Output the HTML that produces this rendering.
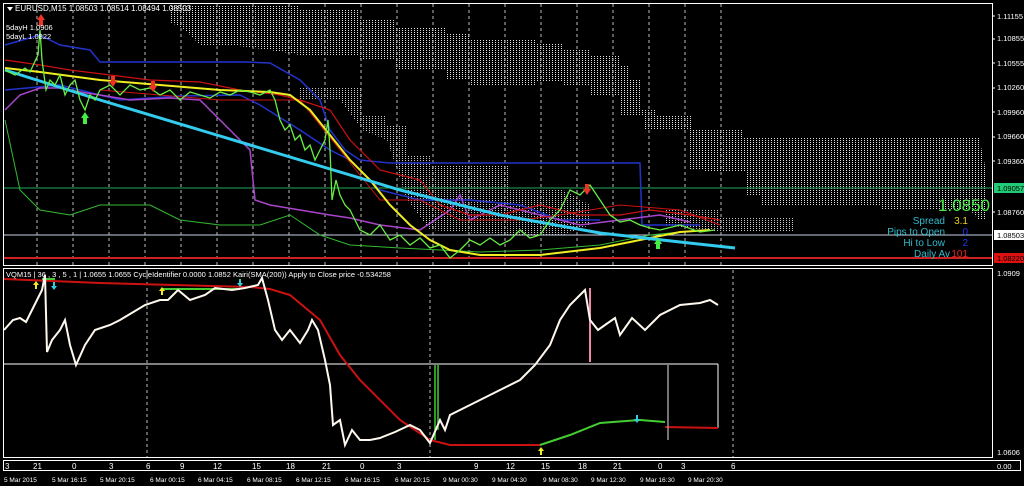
<!DOCTYPE html>
<html><head><meta charset="utf-8"><style>
html,body{margin:0;padding:0;background:#000;width:1024px;height:486px;overflow:hidden}
svg{display:block}
text{font-family:"Liberation Sans",sans-serif}
</style></head><body>
<svg width="1024" height="486" viewBox="0 0 1024 486" xmlns="http://www.w3.org/2000/svg">
<defs>
<pattern id="dots" width="3" height="2" patternUnits="userSpaceOnUse"><rect x="0" y="0" width="1" height="1" fill="#e0e0e0"/></pattern>
</defs>
<rect width="1024" height="486" fill="#000"/>
<!-- upper cloud band -->
<path d="M170,5 L300,5 L300,10 L360,10 L360,20 L396,20 L396,27 L447,27 L447,33 L470,33 L470,40 L537,40 L537,43 L563,43 L563,50 L590,50 L590,55 L621,55 L621,65 L630,65 L630,80 L641,80 L641,110 L657,110 L657,115 L693,115 L693,130 L742,130 L742,137 L979,137 L985,165 L985,220 L979,220 L970,210 L880,210 L880,205 L760,205 L760,195 L746,195 L746,172 L704,172 L704,170 L688,170 L688,130 L644,130 L644,115 L621,115 L621,95 L590,95 L590,85 L563,85 L563,82 L537,82 L537,85 L470,85 L470,80 L447,80 L447,70 L396,70 L396,60 L360,60 L360,55 L300,55 L270,50 L230,45 L200,45 L185,30 L170,22 Z" fill="url(#dots)"/>
<!-- lower cloud pieces -->
<path d="M300,88 L362,88 L362,115 L387,115 L387,125 L407,125 L407,155 L430,155 L430,165 L508,165 L508,190 L563,190 L590,205 L590,225 L563,235 L508,235 L430,230 L407,200 L387,140 L362,130 L340,100 L300,100 Z" fill="url(#dots)" opacity="0.9"/>
<path d="M666,210 L720,210 L720,218 L795,218 L795,232 L720,232 L666,225 Z" fill="url(#dots)" opacity="0.9"/>
<!-- vertical dashed grid -->
<g stroke="#bbb" stroke-width="1" stroke-dasharray="3,3">
<path d="M37,4V265M73,4V265M109,4V265M145,4V265M181,4V265M217,4V265M253,4V265M289,4V265M325,4V265M361,4V265M397,4V265M433,4V265M469,4V265M505,4V265M541,4V265M577,4V265M613,4V265M649,4V265M685,4V265M721,4V265"/>
<path d="M147,270V457M430,270V457M733,270V457"/>
</g>
<!-- horizontal lines -->
<line x1="3" y1="188" x2="992" y2="188" stroke="#22aa55"/>
<line x1="3" y1="235" x2="992" y2="235" stroke="#c8d0e0"/>
<line x1="3" y1="258" x2="992" y2="258" stroke="#cc2222" stroke-width="2"/>
<!-- indicator lines main -->
<polyline fill="none" stroke="#2233cc" stroke-width="1.5" points="5,45 40,35 60,45 90,50 100,62 150,62 245,62 270,63 300,80 320,100 330,130 345,150 360,160 390,163 640,163 642,225 700,225"/>
<polyline fill="none" stroke="#2233cc" stroke-width="1.5" points="5,90 60,85 120,100 150,98 180,96 240,95 260,105 300,130 330,150 350,160 380,190 420,200 470,200 520,205 560,220 600,220"/>
<polyline fill="none" stroke="#aa44cc" stroke-width="1.5" points="5,110 20,95 40,88 60,88 80,92 100,95 130,100 170,98 200,100 230,130 250,150 255,200 270,205 300,210 330,215 350,218 380,225 420,230 450,210 460,195 470,220 480,215 500,205 540,215 580,225 620,220 660,215 690,222"/>
<polyline fill="none" stroke="#cc1111" stroke-width="1.2" points="5,60 40,65 70,70 110,75 150,80 200,82 240,90 280,95 300,100 330,110 350,140 360,150 380,170 400,175 420,180 440,205 470,215 500,215 540,205 580,215 620,215 650,210 690,215 720,220"/>
<polyline fill="none" stroke="#cc1111" stroke-width="1" points="100,90 160,95 220,100 300,100 340,150 380,200 420,200 460,220 520,220 560,215 620,205 680,210 720,225"/>
<polyline fill="none" stroke="#33bb33" stroke-width="1" points="5,120 20,190 40,210 70,215 100,205 150,205 180,220 220,225 260,225 290,215 320,235 350,245 400,248 440,250 480,252 540,250 600,245 650,235 700,230"/>
<polyline fill="none" stroke="#eeee22" stroke-width="2" points="5,68 40,72 100,80 160,85 220,90 270,92 290,95 310,110 330,135 350,160 370,180 390,205 410,225 430,240 450,250 480,255 540,255 600,248 640,240 680,232 710,230"/>
<polyline fill="none" stroke="#33ccee" stroke-width="3" points="5,70 100,100 200,130 300,160 400,190 500,215 600,233 680,242 735,248"/>
<!-- price -->
<polyline fill="none" stroke="#66ee44" stroke-width="1.3" points="5,70 15,75 25,68 30,72 38,55 40,30 42,60 46,90 50,80 55,85 60,75 65,95 70,85 75,80 80,100 85,110 90,95 95,100 100,90 110,85 120,95 130,85 140,90 150,88 160,95 170,90 180,100 190,92 200,95 210,98 220,92 230,95 240,90 250,92 260,95 270,90 275,100 280,120 285,130 290,125 295,140 300,135 305,150 310,145 315,160 320,150 325,140 328,120 330,150 332,200 336,180 340,195 345,205 350,210 355,220 360,230 370,235 380,225 390,240 400,235 410,245 420,238 430,248 440,245 450,258 460,250 470,240 480,245 490,238 500,245 510,240 520,230 530,238 540,235 550,220 560,210 570,190 580,195 590,185 600,200 610,215 620,222 630,220 640,225 650,228 660,230 680,225 700,232 715,230"/>
<!-- arrows -->
<g fill="#ee3322"><path d="M41,14 L45,20 L43,20 L43,26 L39,26 L39,20 L37,20Z"/><path d="M113,75 L117,81 L115,81 L115,86 L111,86 L111,81 L109,81Z" transform="rotate(180 113 81)"/><path d="M153,80 L157,86 L155,86 L155,91 L151,91 L151,86 L149,86Z" transform="rotate(180 153 86)"/><path d="M587,183 L591,189 L589,189 L589,194 L585,194 L585,189 L583,189Z" transform="rotate(180 587 189)"/></g>
<g fill="#44ee44"><path d="M85,112 L89,118 L87,118 L87,124 L83,124 L83,118 L81,118Z"/><path d="M658,238 L662,244 L660,244 L660,249 L656,249 L656,244 L654,244Z"/></g>
<!-- texts main -->
<path d="M7,7 L13,7 L10,11Z" fill="#fff"/>
<text x="15" y="11" font-size="8" fill="#fff">EURUSD,M15  1.08503 1.08514 1.08494 1.08503</text>
<text x="6" y="30" font-size="7.5" fill="#fff">5dayH 1.0906</text>
<text x="6" y="39" font-size="7.5" fill="#fff">5dayL 1.0822</text>
<text x="990" y="211" font-size="17" fill="#44ee44" text-anchor="end">1.0850</text>
<g font-size="10" text-anchor="end">
<text x="945" y="224" fill="#33bbcc">Spread</text><text x="968" y="224" fill="#eecc22">3.1</text>
<text x="945" y="235" fill="#33bbcc">Pips to Open</text><text x="968" y="235" fill="#2233ee">0</text>
<text x="945" y="246" fill="#33bbcc">Hi to Low</text><text x="968" y="246" fill="#2233ee">2</text>
<text x="950" y="257" fill="#33bbcc">Daily Av</text><text x="968" y="257" fill="#ee2222">101</text>
</g>
<!-- frames -->
<rect x="3.5" y="3.5" width="989" height="262" fill="none" stroke="#fff"/>
<rect x="3.5" y="268.5" width="989" height="189" fill="none" stroke="#fff"/>
<rect x="3.5" y="460.5" width="1017" height="10" fill="none" stroke="#fff"/>
<!-- right axis -->
<g font-size="7.5" fill="#fff">
<text x="997" y="19">1.11155</text><text x="997" y="41">1.10855</text><text x="997" y="66">1.10555</text><text x="997" y="90">1.10260</text><text x="997" y="115">1.09960</text><text x="997" y="139">1.09660</text><text x="997" y="164">1.09360</text><text x="997" y="215">1.08760</text>
<text x="997" y="276">1.0909</text><text x="997" y="455">1.0606</text><text x="997" y="469">0.00</text>
</g>
<g stroke="#fff"><path d="M992,16h3M992,39h3M992,63h3M992,88h3M992,112h3M992,137h3M992,161h3M992,212h3"/></g>
<rect x="994" y="183" width="30" height="10" fill="#22cc77"/><text x="997" y="191" font-size="7.5" fill="#000">1.09057</text>
<rect x="994" y="230" width="30" height="10" fill="#fff"/><text x="997" y="238" font-size="7.5" fill="#000">1.08503</text>
<rect x="994" y="253" width="30" height="10" fill="#dd1111"/><text x="997" y="261" font-size="7.5" fill="#000">1.08220</text>
<!-- lower panel -->
<line x1="4" y1="364" x2="718" y2="364" stroke="#fff"/>
<line x1="718" y1="364" x2="718" y2="428" stroke="#fff"/>
<text x="6" y="277" font-size="7.5" fill="#fff">VQM15 | 36 , 3 , 5 , 1  |  1.0655 1.0655  CycleIdentifier 0.0000 1.0852  Kairi(SMA(200)) Apply to Close price -0.534258</text>
<polyline fill="none" stroke="#cc1111" stroke-width="2" points="4,279 100,283 250,287 270,289 290,295 320,320 340,355 360,380 400,420 430,440 450,445 540,445"/>
<polyline fill="none" stroke="#44cc33" stroke-width="2" points="540,445 570,435 600,423 640,420 665,422"/>
<polyline fill="none" stroke="#cc1111" stroke-width="2" points="665,427 718,428"/>
<line x1="42" y1="279" x2="55" y2="279" stroke="#44cc33" stroke-width="2"/>
<line x1="162" y1="289" x2="240" y2="289" stroke="#44cc33" stroke-width="2"/>
<path d="M435,365 V440 M438,365 V430" stroke="#44cc33" stroke-width="1.5"/>
<path d="M590,288 V362" stroke="#ee88aa" stroke-width="2"/>
<path d="M668,365 V440" stroke="#999" stroke-width="1.5"/>
<polyline fill="none" stroke="#fff8ee" stroke-width="2" points="4,330 13,320 20,318 26,322 37,300 42,290 45,275 47,352 52,340 60,330 65,320 70,345 76,365 85,345 95,330 110,325 120,320 145,305 160,300 168,300 178,290 190,300 205,295 215,288 232,290 245,288 258,285 262,278 268,300 275,330 282,340 290,330 300,343 308,330 312,320 318,330 325,360 330,385 333,425 340,420 345,445 352,430 360,440 370,440 380,438 395,432 410,425 420,430 430,443 440,420 445,430 450,415 470,405 500,390 520,380 535,365 550,345 560,320 570,305 580,295 585,290 590,320 598,330 605,325 615,318 620,335 632,318 645,330 660,315 680,305 700,303 710,300 718,305"/>
<g fill="#eeee22"><path d="M36,281 l3,4 h-2 v4 h-2 v-4 h-2z"/><path d="M162,287 l3,4 h-2 v4 h-2 v-4 h-2z"/><path d="M541,447 l3,4 h-2 v4 h-2 v-4 h-2z"/></g>
<g fill="#33ccdd"><path d="M54,290 l3,-4 h-2 v-4 h-2 v4 h-2z"/><path d="M240,287 l3,-4 h-2 v-4 h-2 v4 h-2z"/><path d="M637,423 l3,-4 h-2 v-4 h-2 v4 h-2z"/></g>
<!-- hour axis -->
<g font-size="8" fill="#fff">
<text x="5" y="469">3</text><text x="33" y="469">21</text><text x="72" y="469">0</text><text x="109" y="469">3</text><text x="146" y="469">6</text><text x="180" y="469">9</text><text x="213" y="469">12</text><text x="252" y="469">15</text><text x="286" y="469">18</text><text x="322" y="469">21</text><text x="360" y="469">0</text><text x="397" y="469">3</text><text x="474" y="469">9</text><text x="506" y="469">12</text><text x="541" y="469">15</text><text x="578" y="469">18</text><text x="613" y="469">21</text><text x="658" y="469">0</text><text x="681" y="469">3</text><text x="731" y="469">6</text>
</g>
<g font-size="6.5" fill="#fff">
<text x="4" y="482">5 Mar 2015</text><text x="52" y="482">5 Mar 16:15</text><text x="100" y="482">5 Mar 20:15</text><text x="150" y="482">6 Mar 00:15</text><text x="198" y="482">6 Mar 04:15</text><text x="247" y="482">6 Mar 08:15</text><text x="296" y="482">6 Mar 12:15</text><text x="345" y="482">6 Mar 16:15</text><text x="395" y="482">6 Mar 20:15</text><text x="443" y="482">9 Mar 00:30</text><text x="492" y="482">9 Mar 04:30</text><text x="543" y="482">9 Mar 08:30</text><text x="591" y="482">9 Mar 12:30</text><text x="640" y="482">9 Mar 16:30</text><text x="688" y="482">9 Mar 20:30</text>
</g>
</svg>
</body></html>
